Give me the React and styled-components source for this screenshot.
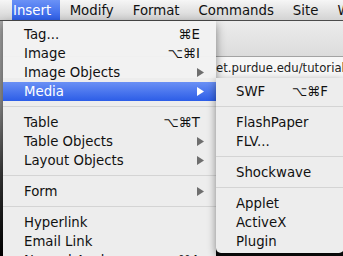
import React from "react";
import styled, { createGlobalStyle } from "styled-components";

const Global = createGlobalStyle`
  html, body { margin: 0; padding: 0; background: #111; overflow: hidden; }
  body { font-family: "DejaVu Sans", "Lucida Grande", sans-serif; -webkit-font-smoothing: antialiased; }
  #root { width: 343px; height: 256px; }
`;

const Screen = styled.div`
  position: relative;
  width: 343px;
  height: 256px;
  overflow: hidden;
  display: flex;
  flex-direction: column;
`;

const MenuBar = styled.div`
  height: 20px;
  flex: 0 0 auto;
  display: flex;
  align-items: stretch;
  padding-left: 12px;
  border-bottom: 1px solid #4b4b4b;
  background: linear-gradient(#f6f6f6, #d3d3d3);
  font-size: 13.3px;
  color: #111;
  white-space: nowrap;
`;

const BarItem = styled.div`
  display: flex;
  align-items: center;
  padding: ${(p) => (p.$first ? "0 9px 0 1px" : "0 9.5px")};
  color: ${(p) => (p.$active ? "#fff" : "#111")};
  background: ${(p) => (p.$active ? "linear-gradient(#6b92f6, #2e5fe8)" : "transparent")};
`;

const Window = styled.div`
  flex: 1;
  display: grid;
  grid-template-columns: 3px 1fr;
`;

const LeftEdge = styled.div`
  background: linear-gradient(#a9a9a9 0, #8d8d8d 35%, #3a3a3a 65%, #000 100%);
`;

const WindowBody = styled.div`
  display: flex;
  flex-direction: column;
  background: #0d0d0d;
`;

const Toolbar = styled.div`
  height: 35px;
  background: linear-gradient(#ececec, #dcdcdc);
  border-bottom: 1px solid #a3a3a3;
`;

const AddressRow = styled.div`
  height: 21px;
  display: flex;
  align-items: center;
  padding-left: 213px;
  background: #f7f7f7;
  font-size: 11.7px;
  color: #222;
  white-space: nowrap;
  overflow: hidden;
`;

const Red = styled.span`
  color: #c0392b;
`;

const Menu = styled.div`
  position: absolute;
  top: ${(p) => p.$top}px;
  left: ${(p) => p.$left}px;
  width: ${(p) => p.$width}px;
  padding: ${(p) => (p.$sub ? "4px 0 2px" : "4px 0 40px")};
  background: rgba(242, 242, 242, 0.98);
  border-radius: ${(p) => (p.$sub ? "0 0 5px 5px" : "0")};
  box-shadow: 0 3px 9px rgba(0, 0, 0, 0.45);
  font-size: 13.3px;
  color: #111;
`;

const Row = styled.div`
  height: 19px;
  display: flex;
  align-items: center;
  padding-left: ${(p) => p.$indent}px;
  padding-right: ${(p) => p.$right}px;
  white-space: nowrap;
  color: ${(p) => (p.$active ? "#fff" : "#111")};
  background: ${(p) => (p.$active ? "linear-gradient(#6a90f5, #2c5de7)" : "transparent")};
`;

const Label = styled.span`
  flex: 1;
`;

const Shortcut = styled.span`
  margin-right: 4px;
`;

const Separator = styled.div`
  height: 1px;
  margin: 5px 0 6px;
  background: #d4d4d4;
`;

const Arrow = ({ active }) => (
  <svg width="7" height="9" viewBox="0 0 7 9">
    <polygon points="0,0 7,4.5 0,9" fill={active ? "#fff" : "#6e6e6e"} />
  </svg>
);

const mainItems = [
  { label: "Tag...", sc: "⌘E" },
  { label: "Image", sc: "⌥⌘I" },
  { label: "Image Objects", sub: true },
  { label: "Media", sub: true, active: true },
  { sep: true },
  { label: "Table", sc: "⌥⌘T" },
  { label: "Table Objects", sub: true },
  { label: "Layout Objects", sub: true },
  { sep: true },
  { label: "Form", sub: true },
  { sep: true },
  { label: "Hyperlink" },
  { label: "Email Link" },
  { label: "Named Anchor", sc: "⌥⌘A" },
];

const subItems = [
  { label: "SWF", sc: "⌥⌘F" },
  { sep: true },
  { label: "FlashPaper" },
  { label: "FLV..." },
  { sep: true },
  { label: "Shockwave" },
  { sep: true },
  { label: "Applet" },
  { label: "ActiveX" },
  { label: "Plugin" },
];

const renderItems = (items, indent, right) =>
  items.map((it, i) =>
    it.sep ? (
      <Separator key={i} />
    ) : (
      <Row key={i} $indent={indent} $right={right} $active={it.active}>
        <Label>{it.label}</Label>
        {it.sc && <Shortcut>{it.sc}</Shortcut>}
        {it.sub && <Arrow active={it.active} />}
      </Row>
    )
  );

export default function App() {
  return (
    <>
      <Global />
      <Screen>
        <MenuBar>
          <BarItem $first $active>Insert</BarItem>
          <BarItem>Modify</BarItem>
          <BarItem>Format</BarItem>
          <BarItem>Commands</BarItem>
          <BarItem>Site</BarItem>
          <BarItem>Window</BarItem>
        </MenuBar>
        <Window>
          <LeftEdge />
          <WindowBody>
            <Toolbar />
            <AddressRow>
              et.purdue.edu/tutorial<Red>s</Red>
            </AddressRow>
          </WindowBody>
        </Window>
        <Menu $top={21} $left={3} $width={213}>
          {renderItems(mainItems, 21, 12)}
        </Menu>
        <Menu $sub $top={78} $left={216} $width={128}>
          {renderItems(subItems, 20, 12)}
        </Menu>
      </Screen>
    </>
  );
}
